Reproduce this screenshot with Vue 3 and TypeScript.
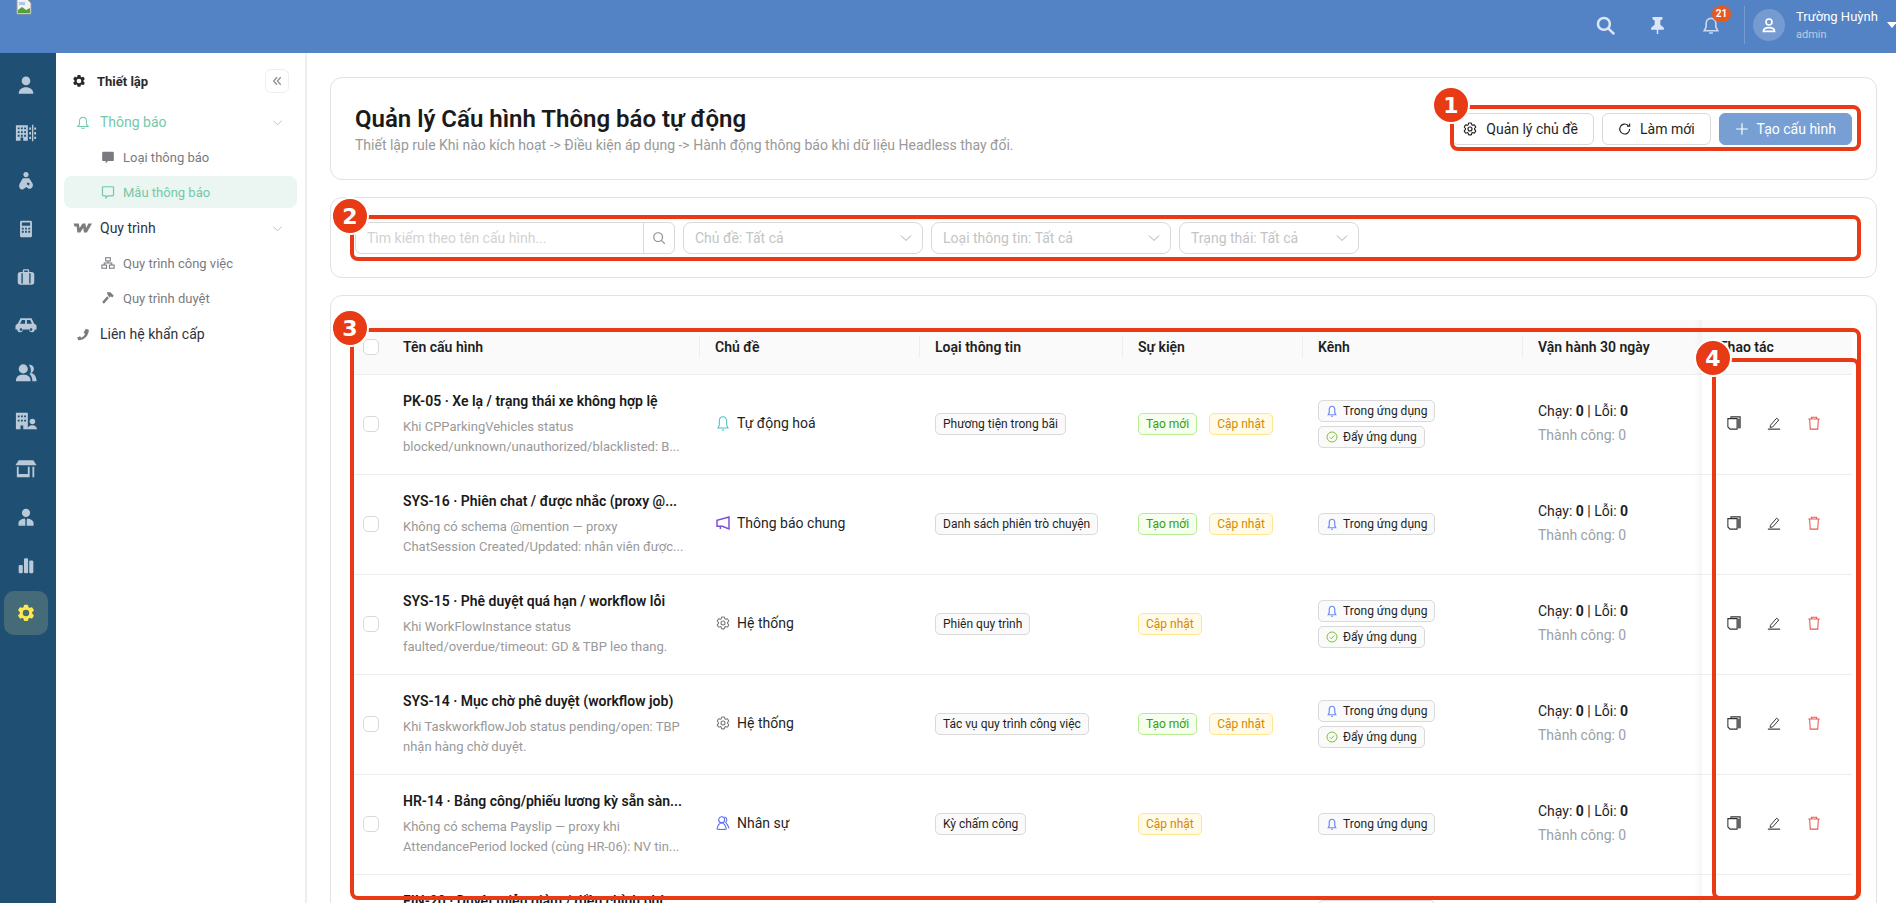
<template>
  <div class="page">
    <header class="topbar">
      <svg class="broken" viewBox="0 0 16 16">
        <path d="M1 0h10l4 4v11H1z" fill="#f2f2f2" stroke="#9a9a9a" />
        <path d="M2 11l4-3 4 3 4-2v5H2z" fill="#5a9e3a" />
        <path d="M3 3h6v3H3z" fill="#a9c8ee" />
      </svg>
      <div class="top-actions">
        <svg class="top-ico search" viewBox="0 0 24 24" fill="none" stroke="currentColor" stroke-width="3.2"><circle cx="10" cy="10" r="7.5" /><path d="M15.5 15.5L23 23" /></svg>
        <svg class="top-ico pin" viewBox="0 0 24 24" fill="currentColor"><path d="M5 0h14v3l-3 2v6l5 4v3h-8v6h-2v-6H3v-3l5-4V5L5 3z" /></svg>
        <div class="bell-wrap">
          <svg class="top-ico bell" viewBox="0 0 24 24" fill="none" stroke="currentColor" stroke-width="2.2"><path d="M12 2.5c-4 0-6.500 3-6.500 7V14L3 19h18l-2.500-5V9.500c0-4-2.500-7-6.500-7zM9.500 22h5" /></svg>
          <span class="bell-count">21</span>
        </div>
        <div class="top-divider"></div>
        <div class="avatar">
          <svg viewBox="0 0 24 24" fill="none" stroke="#fff" stroke-width="2.2"><circle cx="12" cy="8" r="4" /><path d="M4.5 20.500c0-3.500 3-5 7.500-5s7.500 1.500 7.500 5z" /></svg>
        </div>
        <div class="who">
          <div class="who-name">Trường Huỳnh</div>
          <div class="who-role">admin</div>
        </div>
        <span class="caret"></span>
      </div>
    </header>

    <div class="body">
      <nav class="rail">
        <div v-for="(icon, i) in railIcons" :key="i" class="rail-item" :class="{ active: icon === 'gear' }">
          <svg viewBox="0 0 24 24" fill="currentColor" v-html="icons[icon]"></svg>
        </div>
      </nav>

      <aside class="side">
        <div class="side-head">
          <svg class="side-gear" viewBox="0 0 24 24" fill="currentColor" v-html="icons.gear"></svg>
          <span class="side-title">Thiết lập</span>
          <button class="collapse">
            <svg viewBox="0 0 16 16" fill="none" stroke="currentColor" stroke-width="1.7"><path d="M8 3L3.5 8 8 13M13 3L8.5 8l4.5 5" /></svg>
          </button>
        </div>
        <div class="menu">
          <div class="m-parent green">
            <svg class="m-ico" viewBox="0 0 24 24" fill="none" stroke="currentColor" stroke-width="1.8"><path d="M12 3c-4 0-6 3-6 7v5l-3 4h18l-3-4v-5c0-4-2-7-6-7zM9 22h6" /></svg>
            <span>Thông báo</span>
            <svg class="m-chev" viewBox="0 0 12 12" fill="none" stroke="currentColor"><path d="M1.5 4L6 8.5 10.500 4" /></svg>
          </div>
          <div class="m-sub">
            <svg viewBox="0 0 24 24" fill="currentColor"><path d="M4 3h16a2 2 0 0 1 2 2v12a2 2 0 0 1-2 2h-8l-4 4v-4H4a2 2 0 0 1-2-2V5a2 2 0 0 1 2-2z" /></svg>
            <span>Loại thông báo</span>
          </div>
          <div class="m-sub active">
            <svg viewBox="0 0 24 24" fill="none" stroke="currentColor" stroke-width="2"><path d="M4 3h16a1.5 1.5 0 0 1 1.500 1.500V17a1.500 1.500 0 0 1-1.500 1.500h-8L8.500 22v-3.500H4A1.500 1.500 0 0 1 2.500 17V4.500A1.500 1.500 0 0 1 4 3z" /></svg>
            <span>Mẫu thông báo</span>
          </div>
          <div class="m-parent">
            <svg class="m-ico wide" viewBox="0 0 26 14" fill="#7d7d7d"><path d="M1 1h7l1 6 4-6h4l1 6 3-6h5l-7 12h-4l-1-6-4 6H6L5 5H2z" /></svg>
            <span>Quy trình</span>
            <svg class="m-chev" viewBox="0 0 12 12" fill="none" stroke="currentColor"><path d="M1.5 4L6 8.5 10.500 4" /></svg>
          </div>
          <div class="m-sub">
            <svg viewBox="0 0 24 24" fill="none" stroke="currentColor" stroke-width="1.8"><rect x="8" y="3" width="8" height="5.500" /><rect x="1.500" y="15.500" width="8" height="5.500" /><rect x="14.500" y="15.500" width="8" height="5.500" /><path d="M12 8.500V12M5.500 15.500V12h13v3.500" /></svg>
            <span>Quy trình công việc</span>
          </div>
          <div class="m-sub">
            <svg viewBox="0 0 24 24" fill="currentColor"><path d="M10 2h6l6 6-3 3-2-2-2 2-2-2-2-4zM10.500 9l3 3L5 22l-3-3z" /></svg>
            <span>Quy trình duyệt</span>
          </div>
          <div class="m-parent">
            <svg class="m-ico" viewBox="0 0 24 24" fill="#7d7d7d"><path d="M17 2l5 2c0 10-8 18-18 18l-2-5 5-2 2 2.500c3-1.500 5-3.500 6.500-6.500L13 8.500z" /></svg>
            <span>Liên hệ khẩn cấp</span>
          </div>
        </div>
      </aside>

      <main class="content">
        <section class="card head-card">
          <div>
            <h1>Quản lý Cấu hình Thông báo tự động</h1>
            <p>Thiết lập rule Khi nào kích hoạt -&gt; Điều kiện áp dụng -&gt; Hành động thông báo khi dữ liệu Headless thay đổi.</p>
          </div>
          <div class="head-btns">
            <button class="btn topics">
              <svg viewBox="0 0 24 24" fill="none" stroke="currentColor" stroke-width="1.7" v-html="icons.gear2"></svg>
              Quản lý chủ đề
            </button>
            <button class="btn">
              <svg viewBox="0 0 24 24" fill="none" stroke="currentColor" stroke-width="1.9"><path d="M20 12a8.500 8.500 0 1 1-2.500-6M20 2.500V7h-4.500" /></svg>
              Làm mới
            </button>
            <button class="btn primary">
              <svg viewBox="0 0 24 24" fill="none" stroke="currentColor" stroke-width="2"><path d="M12 2v20M2 12h20" /></svg>
              Tạo cấu hình
            </button>
          </div>
        </section>

        <section class="card filters">
          <div class="search-box">
            <input placeholder="Tìm kiếm theo tên cấu hình..." type="text" />
            <span class="search-btn">
              <svg viewBox="0 0 24 24" fill="none" stroke="currentColor" stroke-width="2"><circle cx="10.500" cy="10.500" r="7.500" /><path d="M16 16l6 6" /></svg>
            </span>
          </div>
          <div v-for="f in filters" :key="f.label" class="select" :class="f.size">
            <span>{{ f.label }}</span>
            <svg viewBox="0 0 12 12" fill="none" stroke="currentColor"><path d="M1 3.500l5 5 5-5" /></svg>
          </div>
        </section>

        <section class="card table-card">
          <table>
            <colgroup>
              <col class="c-check" />
              <col class="c-name" />
              <col class="c-topic" />
              <col class="c-kind" />
              <col class="c-event" />
              <col class="c-chan" />
              <col class="c-stat" />
              <col class="c-act" />
            </colgroup>
            <thead>
              <tr>
                <th class="check"><span class="box"></span></th>
                <th>Tên cấu hình</th>
                <th class="sep">Chủ đề</th>
                <th class="sep">Loại thông tin</th>
                <th class="sep">Sự kiện</th>
                <th class="sep">Kênh</th>
                <th class="sep">Vận hành 30 ngày</th>
                <th class="fixed">Thao tác</th>
              </tr>
            </thead>
            <tbody>
              <tr v-for="row in rows" :key="row.name">
                <td class="check"><span class="box"></span></td>
                <td>
                  <div class="name">{{ row.name }}</div>
                  <div class="desc">{{ row.desc }}<br />{{ row.desc2 }}</div>
                </td>
                <td>
                  <div class="topic">
                    <svg :style="{ color: row.topicColor }" viewBox="0 0 24 24" fill="none" stroke="currentColor" stroke-width="1.6" v-html="icons[row.topicIcon]"></svg>
                    {{ row.topic }}
                  </div>
                </td>
                <td><span class="tag solo">{{ row.kind }}</span></td>
                <td>
                  <div class="events">
                    <span v-if="row.isNew" class="tag green">Tạo mới</span>
                    <span class="tag gold">Cập nhật</span>
                  </div>
                </td>
                <td>
                  <div class="channels">
                    <span class="tag chan">
                      <svg viewBox="0 0 24 24" fill="none" stroke="#6f8cf6" stroke-width="2.4" v-html="icons.bell"></svg>
                      Trong ứng dụng
                    </span>
                    <span v-if="row.push" class="tag chan">
                      <svg viewBox="0 0 24 24" fill="none" stroke="#7cc332" stroke-width="2"><circle cx="12" cy="12" r="10" /><path d="M7.5 12.500l3 3 6-6.500" /></svg>
                      Đẩy ứng dụng
                    </span>
                  </div>
                </td>
                <td>
                  <div class="stats">
                    <div>Chạy: <b>0</b> | Lỗi: <b>0</b></div>
                    <div class="muted">Thành công: 0</div>
                  </div>
                </td>
                <td class="fixed">
                  <div class="acts">
                    <svg viewBox="0 0 16 16" fill="none" stroke="#333" stroke-width="1.2"><path d="M4.5 2.500V1H15v12.500h-3.500" /><path d="M1 3h10.500v12H3.500L1 12.500z" /><path d="M11.500 3H15v10.500h-3.500z" fill="#666" stroke="none" /></svg>
                    <svg viewBox="0 0 16 16" fill="none" stroke="#333" stroke-width="1.1"><path d="M1 15h14" stroke-width="1.3" /><path d="M4 10.500L11 2.500l2.500 2-7 8-3 .5z" /></svg>
                    <svg viewBox="0 0 16 16" fill="none" stroke="#e8594f" stroke-width="1.2"><path d="M1.5 3.500h13M5 3.500v-2h6v2M3 3.500L3.700 15h8.600L13 3.500" /></svg>
                  </div>
                </td>
              </tr>
            </tbody>
          </table>
        </section>
      </main>
    </div>

    <div class="note n1"></div>
    <div class="note n2"></div>
    <div class="note n3"></div>
    <div class="note n4"></div>
    <span class="pin-num p1">1</span>
    <span class="pin-num p2">2</span>
    <span class="pin-num p3">3</span>
    <span class="pin-num p4">4</span>
  </div>
</template>

<script setup lang="ts">
interface Row {
  name: string;
  desc: string;
  desc2: string;
  topic: string;
  topicIcon: string;
  topicColor: string;
  kind: string;
  isNew: boolean;
  push: boolean;
}

const gearPath =
  "M9.6 3.9c.1-.5.6-.9 1.1-.9h2.6c.5 0 1 .4 1.1.9l.2 1.3c.1.4.3.7.6.9l.2.1c.3.2.7.3 1.1.1l1.2-.5c.5-.2 1.1 0 1.4.5l1.3 2.2c.3.5.2 1.1-.3 1.4l-1 .8c-.3.2-.4.6-.4 1v.3c0 .4.1.8.4 1l1 .8c.4.4.5 1 .3 1.4l-1.3 2.3c-.3.5-.9.7-1.4.5l-1.2-.5c-.4-.1-.8-.1-1.1.1l-.2.1c-.3.2-.6.5-.6.9l-.2 1.3c-.1.5-.6.9-1.1.9h-2.6c-.5 0-1-.4-1.1-.9l-.2-1.3c-.1-.4-.3-.7-.6-.9l-.2-.1c-.3-.2-.7-.3-1.1-.1l-1.2.5c-.5.2-1.1 0-1.4-.5l-1.3-2.3c-.3-.5-.2-1.1.3-1.4l1-.8c.3-.3.4-.6.4-1v-.3c0-.4-.1-.8-.4-1l-1-.8c-.4-.4-.5-1-.3-1.4l1.3-2.2c.3-.5.9-.7 1.4-.5l1.2.5c.4.1.8.1 1.1-.1l.2-.1c.3-.2.6-.5.6-.9z";

const icons: Record<string, string> = {
  gear: `<path fill-rule="evenodd" d="${gearPath}M12 8.5a3.5 3.5 0 1 0 0 7 3.5 3.5 0 0 0 0-7z"/>`,
  gear2: `<path d="${gearPath}"/><circle cx="12" cy="12" r="3"/>`,
  bell: `<path d="M12 2.5c-3.5 0-5.5 3-5.5 6.5v6l-2 4.5h15l-2-4.5V9c0-3.5-2-6.5-5.5-6.5zM10 22.500h4"/>`,
  megaphone: `<path stroke-width="2.2" d="M21 3v18l-10-4H3V8zM8 17v4"/>`,
  people: `<circle cx="10" cy="7" r="4.5"/><path d="M3 21c1-5 4-9 7-9s6 4 7 9c-3 1-11 1-14 0z"/><path d="M14 3a4.5 4.5 0 0 1 2 8c2 2 4 6 5 9"/>`,
  user: `<circle cx="12" cy="7.5" r="4.7"/><path d="M4 21.5c0-4.5 3.5-7 8-7s8 2.5 8 7z"/>`,
  wheat: `<path fill-rule="evenodd" d="M1 3.5h13v17H9V17H6v3.5H1zM3 6v2h2V6zm3.5 0v2h2V6zM10 6v2h2V6zM3 10v2h2v-2zm3.5 0v2h2v-2zM10 10v2h2v-2zM3 14v2h2v-2zm3.5 0v2h2v-2zM10 14v2h2v-2z"/><path d="M18.500 3H20v18h-1.500zM15.500 6h2v2.500h-2zM21 6h2v2.500h-2zM15.500 11h2v2.500h-2zM21 11h2v2.500h-2zM15.500 16h2v2.500h-2zM21 16h2v2.500h-2z"/>`,
  care: `<circle cx="12" cy="5" r="2.8"/><path fill-rule="evenodd" d="M8.5 9h7l3.5 5.500c1.500 3-.5 6-3 6-1.500 0-2.500-1-3.500-2L9 21c-2.500 1-4.500-1-4.500-3.500 0-3 2.500-5.500 4-8.500zM13 15c-1-1.500 3-1.500 3 0 0 1-1.500 2-1.500 2s-1-1-1.500-2z"/>`,
  calc: `<path fill-rule="evenodd" d="M7 3h10a1.5 1.5 0 0 1 1.5 1.5v15A1.5 1.5 0 0 1 17 21H7a1.5 1.5 0 0 1-1.5-1.5v-15A1.5 1.5 0 0 1 7 3zm.5 2v3.5h9V5zm0 5.5v2h2v-2zm3.5 0v2h2v-2zm3.5 0v2h2v-2zm-7 3.5v2h2v-2zm3.5 0v2h2v-2zm3.5 0v2h2v-2z"/>`,
  case: `<path fill-rule="evenodd" d="M8.5 6.5V5A1.5 1.5 0 0 1 10 3.5h4A1.5 1.5 0 0 1 15.5 5v1.5H18a3 3 0 0 1 3 3v8a3 3 0 0 1-3 3H6a3 3 0 0 1-3-3v-8a3 3 0 0 1 3-3zm1.500 0h4V5h-4zM7 8v11h1.500V8zm8.500 0v11H17V8z"/>`,
  car: `<path fill-rule="evenodd" d="M6 4.5h12l3 6c1.500.5 2.500 1.500 2.500 3V17h-2a3 3 0 0 1-6 0h-7a3 3 0 0 1-6 0h-2v-3.500c0-1.500 1-2.500 2.500-3zm1.500 2l-2 4H11v-4zm5.500 0v4h5.500l-2-4zM6.500 15.500a1.500 1.500 0 1 0 0 3 1.500 1.500 0 0 0 0-3zm11 0a1.500 1.500 0 1 0 0 3 1.500 1.500 0 0 0 0-3z"/>`,
  users: `<circle cx="9" cy="7.5" r="5"/><path d="M1 21c0-5 3-7 8-7s8 2 8 7z"/><path d="M15 3a4.5 4.5 0 0 1 2 9c4 .5 6.500 4 6.500 9H19c0-3-1-6-3-8 2-2 2-6-1-10z"/>`,
  office: `<path fill-rule="evenodd" d="M1 3h13v18H9v-4H6v4H1zM3 6v2h2V6zm3.5 0v2h2V6zM10 6v2h2V6zM3 10.500v2h2v-2zm3.500 0v2h2v-2zm3.500 0v2h2v-2z"/><circle cx="19" cy="12.5" r="3"/><path d="M13.5 21c0-2.500 2.500-4.500 5.500-4.500s5 2 5 4.500z"/>`,
  store: `<path d="M4 2.5h16L23.5 8H.5z"/><path fill-rule="evenodd" d="M2 9.5h14V21H2zm2 0v8h10v-8z"/><path d="M19 9.5h2V21h-2z"/>`,
  tie: `<circle cx="12" cy="7.5" r="4.5"/><path fill-rule="evenodd" d="M3.8 21.5v-3c0-2.500 3-4.500 7-5l.5 2v6zm9 0v-6l.5-2c4 .5 7 2.500 7 5v3z"/>`,
  chart: `<rect x="4" y="12" width="4.5" height="9" rx="1.5"/><rect x="9.8" y="4.5" width="4.5" height="16.5" rx="1.5"/><rect x="15.5" y="7" width="4.5" height="14" rx="1.5"/>`,
};

const railIcons = ["user", "wheat", "care", "calc", "case", "car", "users", "office", "store", "tie", "chart", "gear"];

const filters = [
  { label: "Chủ đề: Tất cả", size: "wide" },
  { label: "Loại thông tin: Tất cả", size: "wide" },
  { label: "Trạng thái: Tất cả", size: "" },
];

const auto = { topic: "Tự động hoá", topicIcon: "bell", topicColor: "#4cc3c7" };
const general = { topic: "Thông báo chung", topicIcon: "megaphone", topicColor: "#7c4ddb" };
const system = { topic: "Hệ thống", topicIcon: "gear2", topicColor: "#777" };
const staff = { topic: "Nhân sự", topicIcon: "people", topicColor: "#5b6cf0" };

const rows: Row[] = [
  { name: "PK-05 · Xe lạ / trạng thái xe không hợp lệ", desc: "Khi CPParkingVehicles status", desc2: "blocked/unknown/unauthorized/blacklisted: B...", ...auto, kind: "Phương tiện trong bãi", isNew: true, push: true },
  { name: "SYS-16 · Phiên chat / được nhắc (proxy @...", desc: "Không có schema @mention — proxy", desc2: "ChatSession Created/Updated: nhân viên được...", ...general, kind: "Danh sách phiên trò chuyện", isNew: true, push: false },
  { name: "SYS-15 · Phê duyệt quá hạn / workflow lỗi", desc: "Khi WorkFlowInstance status", desc2: "faulted/overdue/timeout: GD & TBP leo thang.", ...system, kind: "Phiên quy trình", isNew: false, push: true },
  { name: "SYS-14 · Mục chờ phê duyệt (workflow job)", desc: "Khi TaskworkflowJob status pending/open: TBP", desc2: "nhận hàng chờ duyệt.", ...system, kind: "Tác vụ quy trình công việc", isNew: true, push: true },
  { name: "HR-14 · Bảng công/phiếu lương kỳ sẵn sàn...", desc: "Không có schema Payslip — proxy khi", desc2: "AttendancePeriod locked (cùng HR-06): NV tin...", ...staff, kind: "Kỳ chấm công", isNew: false, push: false },
  { name: "FIN-20 · Duyệt miễn giảm / điều chỉnh phí", desc: "Khi yêu cầu miễn giảm được tạo", desc2: "hoặc cập nhật trạng thái.", ...system, kind: "Phiếu điều chỉnh", isNew: true, push: true },
];
</script>

<style>
html,
body {
  margin: 0;
  height: 100%;
  overflow: hidden;
  background: #fff;
}
</style>

<style scoped>
* {
  box-sizing: border-box;
}

.page {
  position: relative;
  width: 1896px;
  height: 903px;
  overflow: hidden;
  font-family: Roboto, "Noto Sans", sans-serif;
  font-size: 14px;
  color: #1f1f1f;
  background: #fff;
}

.topbar {
  display: flex;
  align-items: flex-start;
  justify-content: space-between;
  height: 53px;
  background: #5483c5;
  padding-left: 16px;
}

.broken {
  width: 16px;
  height: 16px;
  margin-top: -1px;
}

.top-actions {
  display: flex;
  align-items: center;
  height: 50px;
  color: #dbe6f4;
}

.top-ico {
  display: block;
  width: 19px;
  height: 19px;
}

.pin {
  width: 17px;
  margin-left: 34px;
}

.bell-wrap {
  position: relative;
  margin-left: 36px;
}

.bell {
  width: 18px;
  height: 21px;
  color: #c9d9ee;
}

.bell-count {
  position: absolute;
  top: -9px;
  left: 10px;
  width: 19px;
  height: 16px;
  border-radius: 8px;
  background: #e8591f;
  color: #fff;
  font-size: 10px;
  font-weight: 700;
  line-height: 16px;
  text-align: center;
}

.top-divider {
  width: 1px;
  height: 38px;
  margin-left: 24px;
  background: rgba(255, 255, 255, 0.2);
}

.avatar {
  display: flex;
  align-items: center;
  justify-content: center;
  width: 32px;
  height: 32px;
  margin-left: 8px;
  border-radius: 50%;
  background: rgba(255, 255, 255, 0.2);
}

.avatar svg {
  width: 18px;
  height: 18px;
}

.who {
  margin-left: 11px;
  width: 91px;
}

.who-name {
  color: #fff;
  font-size: 13px;
  line-height: 18px;
  margin-top: -1px;
}

.who-role {
  color: rgba(255, 255, 255, 0.6);
  font-size: 11px;
  line-height: 14px;
  margin-top: 2px;
}

.caret {
  width: 0;
  height: 0;
  border-left: 5px solid transparent;
  border-right: 5px solid transparent;
  border-top: 6px solid #fff;
  margin-right: -1px;
}

.body {
  display: flex;
  height: 850px;
}

.rail {
  flex: 0 0 56px;
  display: flex;
  flex-direction: column;
  padding-top: 8px;
  background: #1f5073;
  color: #b9c9d8;
}

.rail-item {
  display: flex;
  align-items: center;
  justify-content: center;
  width: 44px;
  height: 44px;
  margin: 2px 0 2px 4px;
  border-radius: 10px;
}

.rail-item svg {
  width: 22px;
  height: 22px;
}

.rail-item.active {
  background: #456a78;
  color: #ffe94a;
}

.side {
  flex: 0 0 251px;
  padding: 16px 8px 0;
  border-right: 2px solid #eee;
}

.side-head {
  display: flex;
  align-items: center;
  height: 24px;
  padding-left: 7px;
  color: #2a2a2a;
}

.side-gear {
  width: 16px;
  height: 16px;
}

.side-title {
  margin-left: 10px;
  font-size: 13px;
  font-weight: 700;
}

.collapse {
  display: flex;
  align-items: center;
  justify-content: center;
  width: 24px;
  height: 24px;
  margin-left: auto;
  margin-right: 8px;
  padding: 0;
  border: 1px solid #eee;
  border-radius: 6px;
  background: #fff;
  color: #8a8f98;
}

.collapse svg {
  width: 12px;
  height: 12px;
}

.menu {
  display: flex;
  flex-direction: column;
  margin-top: 11px;
}

.m-parent {
  display: flex;
  align-items: center;
  height: 36px;
  padding-left: 36px;
  position: relative;
  color: #2f3241;
  font-size: 14px;
}

.m-parent.green {
  color: #74c8aa;
}

.m-ico {
  position: absolute;
  left: 12px;
  width: 14px;
  height: 15px;
}

.m-ico.wide {
  left: 9px;
  width: 19px;
  height: 12px;
}

.m-chev {
  position: absolute;
  right: 14px;
  width: 11px;
  height: 11px;
  color: #b5b8bd;
}

.m-sub {
  display: flex;
  align-items: center;
  gap: 8px;
  height: 32px;
  margin: 1px 0 2px;
  padding-left: 37px;
  border-radius: 8px;
  color: #7a7a80;
  font-size: 13px;
}

.m-sub svg {
  width: 14px;
  height: 14px;
}

.m-sub.active {
  background: #ebf5f1;
  color: #74c8aa;
}

.content {
  flex: 1;
  display: flex;
  flex-direction: column;
  gap: 17px;
  padding: 24px 19px 0 23px;
  min-width: 0;
}

.card {
  flex: none;
  border: 1px solid #e2e2e2;
  border-radius: 12px;
  background: #fff;
}

.head-card {
  display: flex;
  align-items: center;
  justify-content: space-between;
  height: 103px;
  padding: 0 24px;
}

h1 {
  margin: 0;
  font-size: 24px;
  font-weight: 600;
  line-height: 32px;
  color: #1a1a1a;
}

.head-card p {
  margin: 0;
  color: #999;
  font-size: 14px;
  line-height: 20px;
}

.head-btns {
  display: flex;
  gap: 8px;
}

.btn {
  display: flex;
  align-items: center;
  gap: 8px;
  height: 32px;
  padding: 0 15px;
  border: 1px solid #d9d9d9;
  border-radius: 6px;
  background: #fff;
  color: #1f1f1f;
  font-family: inherit;
  font-size: 14px;
}

.btn svg {
  width: 14px;
  height: 14px;
}

.btn.topics {
  padding-left: 9px;
}

.btn.topics svg {
  width: 16px;
  height: 16px;
}

.btn.primary {
  border-color: #779fd3;
  background: #779fd3;
  color: #fff;
}

.filters {
  display: flex;
  gap: 8px;
  height: 81px;
  padding: 24px;
}

.search-box {
  display: flex;
  width: 320px;
  height: 32px;
  border: 1px solid #d9d9d9;
  border-radius: 6px;
}

.search-box input {
  flex: 1;
  min-width: 0;
  padding: 0 11px;
  border: 0;
  outline: 0;
  background: transparent;
  font-family: inherit;
  font-size: 14px;
}

.search-box input::placeholder {
  color: #d2d2d2;
}

.search-btn {
  display: flex;
  align-items: center;
  justify-content: center;
  width: 31px;
  border-left: 1px solid #d9d9d9;
  color: #8c8c8c;
}

.search-btn svg {
  width: 14px;
  height: 14px;
}

.select {
  display: flex;
  align-items: center;
  justify-content: space-between;
  width: 180px;
  height: 32px;
  padding: 0 10px 0 11px;
  border: 1px solid #d9d9d9;
  border-radius: 8px;
  color: #c4c4c4;
}

.select.wide {
  width: 240px;
}

.select svg {
  width: 12px;
  height: 12px;
  color: #aaa;
}

.table-card {
  padding: 24px 23px 0 23px;
}

table {
  width: 1498px;
  border-collapse: separate;
  border-spacing: 0;
  table-layout: fixed;
}

.c-check {
  width: 33px;
}

.c-name {
  width: 312px;
}

.c-topic {
  width: 220px;
}

.c-kind {
  width: 203px;
}

.c-event {
  width: 180px;
}

.c-chan {
  width: 220px;
}

.c-stat {
  width: 180px;
}

.c-act {
  width: 150px;
}

th {
  position: relative;
  height: 55px;
  padding: 0 0 1px 16px;
  border-bottom: 1px solid #eee;
  background: #fafafa;
  font-size: 14px;
  font-weight: 600;
  text-align: left;
  color: #1f1f1f;
}

th.sep::before {
  content: "";
  position: absolute;
  left: 0;
  top: 16px;
  width: 1px;
  height: 22px;
  background: #eee;
}

td {
  height: 100px;
  padding: 0 0 2px 16px;
  border-bottom: 1px solid #eee;
  vertical-align: middle;
}

th.check {
  padding: 0 0 1px 9px;
}

td.check {
  padding: 0 0 2px 9px;
}

.box {
  display: block;
  width: 16px;
  height: 16px;
  border: 1px solid #d9d9d9;
  border-radius: 5px;
  background: #fff;
}

th.fixed {
  position: relative;
  padding-left: 17px;
}

td.fixed {
  position: relative;
  padding-left: 17px;
}

.fixed::before {
  content: "";
  position: absolute;
  top: 0;
  bottom: -1px;
  left: -8px;
  width: 8px;
  background: linear-gradient(to right, transparent, rgba(0, 0, 0, 0.035));
}

.name {
  margin-top: -1px;
  font-weight: 600;
  font-size: 14px;
  line-height: 22px;
  color: #1a1a1a;
  white-space: nowrap;
}

.desc {
  margin-top: 5px;
  color: #999;
  font-size: 13px;
  line-height: 20px;
  white-space: nowrap;
}

.topic {
  display: flex;
  align-items: center;
  gap: 6px;
  margin-top: -2px;
  font-size: 14px;
}

.topic svg {
  width: 16px;
  height: 16px;
}

.tag {
  display: inline-flex;
  align-items: center;
  height: 22px;
  padding: 0 7px;
  border: 1px solid #d9d9d9;
  border-radius: 5px;
  background: #fafafa;
  color: #1f1f1f;
  font-size: 12px;
  white-space: nowrap;
}

.tag.solo {
  display: flex;
  width: fit-content;
}

.events {
  display: flex;
  gap: 12px;
}

.tag.green {
  border-color: #b7eb8f;
  background: #f6ffed;
  color: #389e0d;
}

.tag.gold {
  border-color: #ffe58f;
  background: #fffbe6;
  color: #d48806;
}

.channels {
  display: flex;
  flex-direction: column;
  align-items: flex-start;
  gap: 4px;
}

.chan {
  gap: 5px;
}

.chan svg {
  width: 12px;
  height: 12px;
}

.stats {
  margin-top: -1px;
  line-height: 24px;
  font-size: 14px;
}

.stats b {
  font-weight: 700;
}

.muted {
  color: #9aa0a6;
}

.acts {
  display: flex;
  gap: 26px;
  margin: -2px 0 0 8px;
}

.acts svg {
  width: 14px;
  height: 14px;
}

.note {
  position: absolute;
  border: 4px solid #e83a14;
  border-radius: 8px;
  pointer-events: none;
}

.n1 {
  left: 1450px;
  top: 105px;
  width: 411px;
  height: 46px;
}

.n2 {
  left: 350px;
  top: 215px;
  width: 1511px;
  height: 46px;
}

.n3 {
  left: 350px;
  top: 328px;
  width: 1511px;
  height: 572px;
}

.n4 {
  left: 1712px;
  top: 358px;
  width: 148px;
  height: 542px;
}

.pin-num {
  position: absolute;
  display: flex;
  align-items: center;
  justify-content: center;
  width: 38px;
  height: 38px;
  border: 2px solid #fff;
  border-radius: 50%;
  background: #e83a14;
  color: #fff;
  font-family: "DejaVu Sans", sans-serif;
  font-size: 22px;
  font-weight: 700;
}

.p1 {
  left: 1432px;
  top: 86px;
}

.p2 {
  left: 331px;
  top: 197px;
}

.p3 {
  left: 331px;
  top: 309px;
}

.p4 {
  left: 1694px;
  top: 339px;
}
</style>
